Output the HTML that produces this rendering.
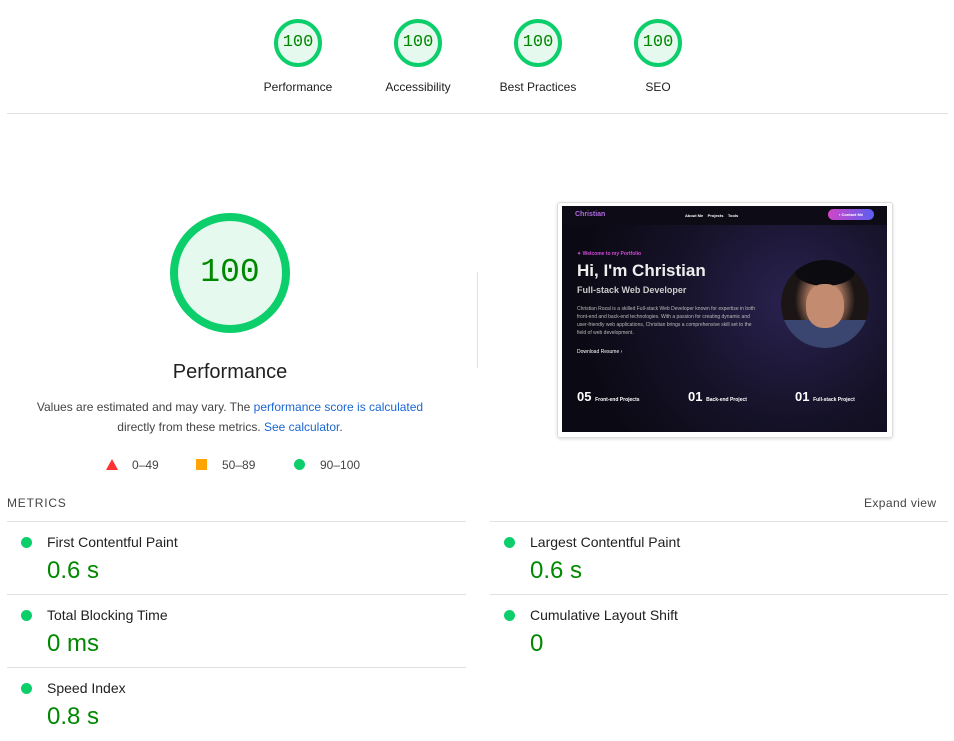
<!DOCTYPE html>
<html><head><meta charset="utf-8"><style>
body{margin:0;width:954px;height:741px;background:#fff;font-family:"Liberation Sans",sans-serif;position:relative;overflow:hidden;color:#212121}
.a{position:absolute}
.g{position:absolute;width:40px;height:40px;border:4px solid #0cce6b;border-radius:50%;background:#e5f9ee;color:#080;font-family:"Liberation Mono",monospace;font-size:17px;text-align:center;line-height:40px}
.gl{position:absolute;width:120px;text-align:center;font-size:12px;color:#212121}
.hr{position:absolute;height:1px;background:#e0e0e0}
.dot{position:absolute;width:11px;height:11px;border-radius:50%;background:#0cce6b}
.mt{position:absolute;font-size:14px;color:#212121}
.mv{position:absolute;font-size:24px;color:#080}
a{color:#1a67d2;text-decoration:none}
</style></head><body>
<div class="g" style="left:274px;top:19px">100</div>
<div class="g" style="left:394px;top:19px">100</div>
<div class="g" style="left:514px;top:19px">100</div>
<div class="g" style="left:634px;top:19px">100</div>
<div class="gl" style="left:238px;top:80px">Performance</div>
<div class="gl" style="left:358px;top:80px">Accessibility</div>
<div class="gl" style="left:478px;top:80px">Best Practices</div>
<div class="gl" style="left:598px;top:80px">SEO</div>
<div class="hr" style="left:7px;width:941px;top:113px"></div>

<div class="g" style="left:170px;top:213px;width:104px;height:104px;border-width:8px;line-height:104px;font-size:33px">100</div>
<div class="a" style="left:130px;top:361px;width:200px;text-align:center;font-size:20px">Performance</div>
<div class="a" style="left:20px;top:397px;width:420px;text-align:center;font-size:12px;line-height:20px;color:#444">Values are estimated and may vary. The <a>performance score is calculated</a> directly from these metrics. <a>See calculator</a>.</div>
<div class="a" style="left:106px;top:459px;width:0;height:0;border-left:6px solid transparent;border-right:6px solid transparent;border-bottom:11px solid #f33"></div>
<div class="a" style="left:132px;top:458px;font-size:12px;color:#444">0–49</div>
<div class="a" style="left:196px;top:459px;width:11px;height:11px;background:#ffa400"></div>
<div class="a" style="left:222px;top:458px;font-size:12px;color:#444">50–89</div>
<div class="dot" style="left:294px;top:459px"></div>
<div class="a" style="left:320px;top:458px;font-size:12px;color:#444">90–100</div>
<div class="a" style="left:477px;top:272px;width:1px;height:96px;background:#e0e0e0"></div>

<div class="a" style="left:557px;top:202px;width:334px;height:234px;border:1px solid #ddd;border-radius:3px;box-shadow:0 1px 3px rgba(0,0,0,.15)"></div>
<div class="a" style="left:562px;top:206px;width:325px;height:226px;background:radial-gradient(circle at 230px 95px,#2a2250 0,#151228 45%,#0b0a14 80%);overflow:hidden;color:#fff;font-weight:bold">
 <div class="a" style="left:0;top:0;width:325px;height:19px;background:#0c0b16"></div>
 <div class="a" style="left:13px;top:5px;font-size:7px;color:#b46ae0">Christian</div>
 <div class="a" style="left:123px;top:7px;font-size:4px">About Me &nbsp;&nbsp; Projects &nbsp;&nbsp; Tools</div>
 <div class="a" style="left:266px;top:3px;width:46px;height:11px;border-radius:6px;background:linear-gradient(90deg,#d046c8,#5b5ef0);font-size:4px;line-height:11px;text-align:center">▪ Contact Me</div>
 <div class="a" style="left:15px;top:45px;font-size:5px;color:#d24ad8">✦ Welcome to my Portfolio</div>
 <div class="a" style="left:15px;top:55px;font-size:17px;color:#eee">Hi, I'm Christian</div>
 <div class="a" style="left:15px;top:79px;font-size:9px;color:#ccc">Full-stack Web Developer</div>
 <div class="a" style="left:15px;top:99px;width:185px;font-size:5px;line-height:8px;font-weight:normal;color:#bbb">Christian Rozal is a skilled Full-stack Web Developer known for expertise in both front-end and back-end technologies. With a passion for creating dynamic and user-friendly web applications, Christian brings a comprehensive skill set to the field of web development.</div>
 <div class="a" style="left:15px;top:143px;font-size:5px;font-weight:normal">Download Resume ›</div>
 <div class="a" style="left:219px;top:54px;width:88px;height:88px;border-radius:50%;background:radial-gradient(ellipse 30px 38px at 50% 45%,#d19a80 0,#b07a62 50%,#1b1615 100%),#111;overflow:hidden"><div class="a" style="left:0;top:60px;width:88px;height:30px;background:#3a4670"></div><div class="a" style="left:14px;top:-4px;width:60px;height:30px;border-radius:50%;background:#0c0b10"></div><div class="a" style="left:25px;top:24px;width:38px;height:44px;border-radius:45%;background:#c38b70"></div></div>
 <div class="a" style="left:15px;top:183px;font-size:13px">05 <span style="font-size:5px">Front-end Projects</span></div>
 <div class="a" style="left:126px;top:183px;font-size:13px">01 <span style="font-size:5px">Back-end Project</span></div>
 <div class="a" style="left:233px;top:183px;font-size:13px">01 <span style="font-size:5px">Full-stack Project</span></div>
</div>

<div class="a" style="left:7px;top:496px;font-size:12px;letter-spacing:.8px;color:#444">METRICS</div>
<div class="a" style="left:864px;top:496px;font-size:12px;letter-spacing:.4px;color:#444">Expand view</div>
<div class="hr" style="left:7px;width:459px;top:521px"></div>
<div class="hr" style="left:490px;width:458px;top:521px"></div>
<div class="hr" style="left:7px;width:459px;top:594px"></div>
<div class="hr" style="left:490px;width:458px;top:594px"></div>
<div class="hr" style="left:7px;width:459px;top:667px"></div>

<div class="dot" style="left:21px;top:537px"></div><div class="mt" style="left:47px;top:534px">First Contentful Paint</div><div class="mv" style="left:47px;top:557px">0.6 s</div>
<div class="dot" style="left:504px;top:537px"></div><div class="mt" style="left:530px;top:534px">Largest Contentful Paint</div><div class="mv" style="left:530px;top:557px">0.6 s</div>
<div class="dot" style="left:21px;top:610px"></div><div class="mt" style="left:47px;top:607px">Total Blocking Time</div><div class="mv" style="left:47px;top:630px">0 ms</div>
<div class="dot" style="left:504px;top:610px"></div><div class="mt" style="left:530px;top:607px">Cumulative Layout Shift</div><div class="mv" style="left:530px;top:630px">0</div>
<div class="dot" style="left:21px;top:683px"></div><div class="mt" style="left:47px;top:680px">Speed Index</div><div class="mv" style="left:47px;top:703px">0.8 s</div>
</body></html>
